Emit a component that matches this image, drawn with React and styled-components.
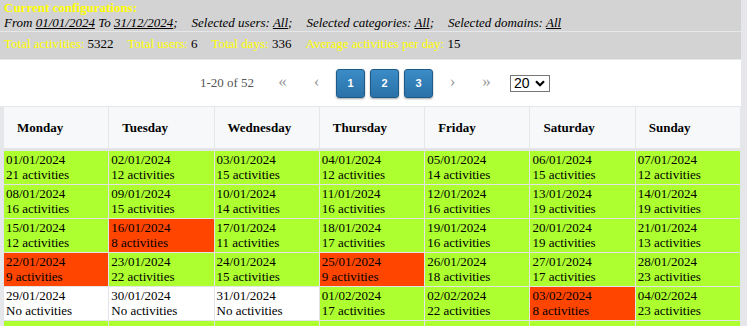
import React from "react";
import styled, { createGlobalStyle } from "styled-components";

const GlobalStyle = createGlobalStyle`
  html, body {
    margin: 0;
    padding: 0;
    background: #e5e7eb;
    font-family: "Liberation Serif", "Times New Roman", serif;
    font-size: 13px;
    color: #000;
  }
`;

const Page = styled.div`
  width: 741px;
  background: #fff;
`;

const Config = styled.div`
  background: #d3d3d3;
  border-bottom: 1px solid #e5e7eb;
`;

const ConfigRow = styled.div`
  line-height: 15px;
  padding: ${(p) => p.$pad};
  border-bottom: ${(p) => (p.$divider ? "1px solid #e5e7eb" : "none")};
`;

const Title = styled.div`
  color: #ffff00;
  font-weight: bold;
`;

const Line = styled.div`
  display: flex;
  gap: 14px;
  font-style: ${(p) => (p.$italic ? "italic" : "normal")};
  white-space: nowrap;
`;

const Label = styled.span`
  color: #ffff00;
`;

const Link = styled.span`
  text-decoration: underline;
`;

const Pager = styled.div`
  height: 46px;
  display: flex;
  align-items: center;
  justify-content: center;
  gap: 5px;
  padding-left: 9px;
  border-bottom: 1px solid #e5e7eb;
`;

const Info = styled.span`
  color: #555;
  font-size: 13px;
  margin-right: 9px;
`;

const Arrow = styled.span`
  width: 29px;
  text-align: center;
  color: #999;
  font-size: 17px;
  line-height: 17px;
  margin-top: -4px;
`;

const PageButton = styled.button`
  width: 29px;
  height: 29px;
  padding: 0;
  border: 1px solid #1d5a88;
  border-radius: 3px;
  background: linear-gradient(#3b8cc7, #2a71a8);
  box-shadow: 0 1px 2px rgba(0, 0, 0, 0.35);
  color: #fff;
  font-family: "Liberation Sans", Arial, sans-serif;
  font-weight: bold;
  font-size: 11px;
`;

const SelectBox = styled.div`
  margin-left: 4px;
  width: 40px;
  height: 17px;
  box-sizing: border-box;
  border: 1px solid #767676;
  display: flex;
  align-items: center;
  justify-content: space-between;
  padding: 0 4px 0 3px;
  font-family: "Liberation Sans", Arial, sans-serif;
  font-size: 14px;
  line-height: 15px;
`;

const TableWrap = styled.div`
  background: #e5e7eb;
  padding-left: 3px;
`;

const Table = styled.table`
  width: 738px;
  border-collapse: collapse;
  table-layout: fixed;
  background: #fff;
  font-size: 13px;
`;

const Head = styled.th`
  height: 41px;
  padding: 0 13px;
  text-align: left;
  font-size: 13px;
  font-weight: bold;
  background: #f7f8fa;
  border-left: 1px solid #e5e7eb;
  border-right: 1px solid #e5e7eb;
  border-bottom: 3px solid #e3e5e9;
`;

const Cell = styled.td`
  padding: 1px 2px 2px;
  line-height: 15px;
  vertical-align: top;
  white-space: nowrap;
  overflow: hidden;
  border: 1px solid #e2e4e8;
  background: ${(p) => p.$bg};
`;

const days = ["Monday", "Tuesday", "Wednesday", "Thursday", "Friday", "Saturday", "Sunday"];

const counts = [
  21, 12, 15, 12, 14, 15, 12,
  16, 15, 14, 16, 16, 19, 19,
  12, 8, 11, 17, 16, 19, 13,
  9, 22, 15, 9, 18, 17, 23,
  0, 0, 0, 17, 22, 8, 23,
  14, 16, 18, 13, 15, 20, 17,
];

const pad = (n) => String(n).padStart(2, "0");

const cells = counts.map((count, i) => {
  const d = new Date(2024, 0, 1 + i);
  return {
    date: `${pad(d.getDate())}/${pad(d.getMonth() + 1)}/${d.getFullYear()}`,
    count,
  };
});

const rows = [];
for (let i = 0; i < cells.length; i += 7) rows.push(cells.slice(i, i + 7));

const colour = (count) => (count === 0 ? "#ffffff" : count < 10 ? "#ff4500" : "#adff2f");

export default function App() {
  return (
    <>
      <GlobalStyle />
      <Page>
        <Config>
          <ConfigRow $pad="0 4px 1px" $divider>
            <Title>Current configurations:</Title>
            <Line $italic>
              <span>
                From <Link>01/01/2024</Link> To <Link>31/12/2024</Link>;
              </span>
              <span>
                Selected users: <Link>All</Link>;
              </span>
              <span>
                Selected categories: <Link>All</Link>;
              </span>
              <span>
                Selected domains: <Link>All</Link>
              </span>
            </Line>
          </ConfigRow>
          <ConfigRow $pad="4px 4px 8px">
            <Line>
              <span>
                <Label>Total activities:</Label> 5322
              </span>
              <span>
                <Label>Total users:</Label> 6
              </span>
              <span>
                <Label>Total days:</Label> 336
              </span>
              <span>
                <Label>Average activities per day:</Label> 15
              </span>
            </Line>
          </ConfigRow>
        </Config>

        <Pager>
          <Info>1-20 of 52</Info>
          <Arrow>«</Arrow>
          <Arrow>‹</Arrow>
          <PageButton>1</PageButton>
          <PageButton>2</PageButton>
          <PageButton>3</PageButton>
          <Arrow>›</Arrow>
          <Arrow>»</Arrow>
          <SelectBox>
            <span>20</span>
            <svg width="10" height="7" viewBox="0 0 10 7">
              <path d="M1 1.2 L5 5.2 L9 1.2" fill="none" stroke="#000" strokeWidth="2.2" />
            </svg>
          </SelectBox>
        </Pager>

        <TableWrap>
          <Table>
            <thead>
              <tr>
                {days.map((d) => (
                  <Head key={d}>{d}</Head>
                ))}
              </tr>
            </thead>
            <tbody>
              {rows.map((row, r) => (
                <tr key={r}>
                  {row.map((c) => (
                    <Cell key={c.date} $bg={colour(c.count)}>
                      {c.date}
                      <br />
                      {c.count === 0 ? "No activities" : `${c.count} activities`}
                    </Cell>
                  ))}
                </tr>
              ))}
            </tbody>
          </Table>
        </TableWrap>
      </Page>
    </>
  );
}
